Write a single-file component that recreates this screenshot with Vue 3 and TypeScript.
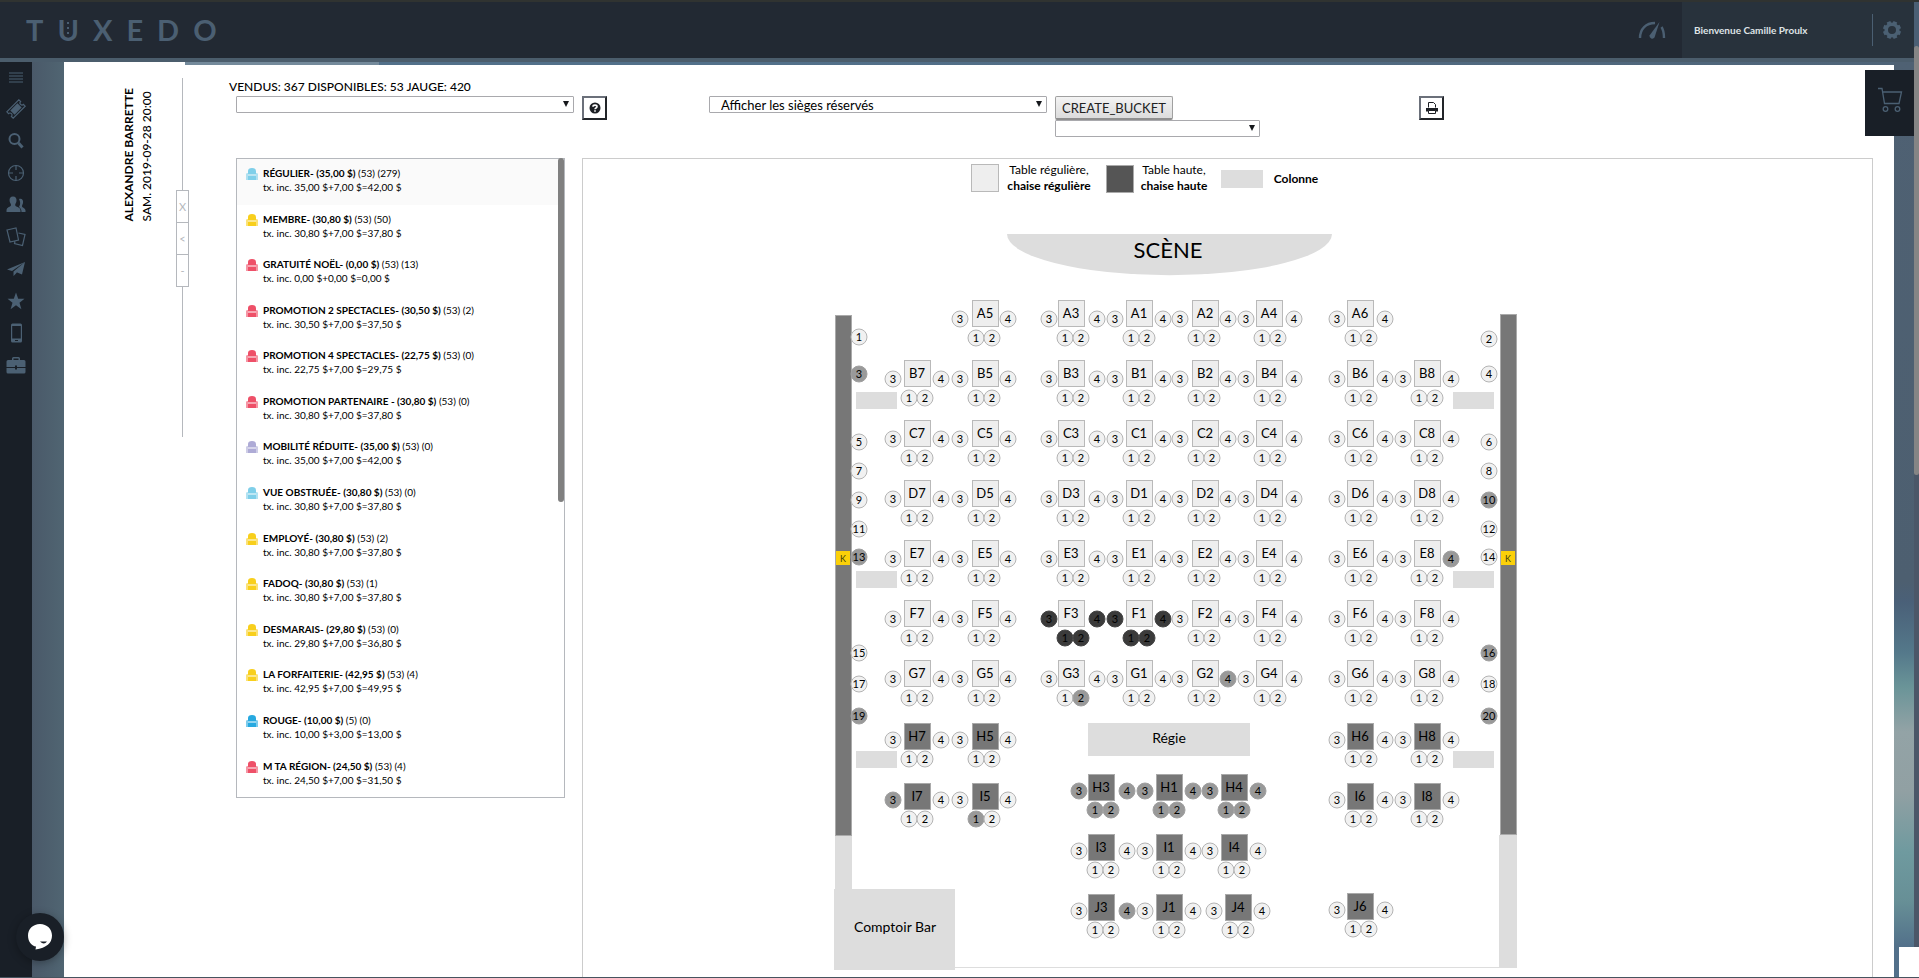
<script setup lang="ts">
import { computed, ref } from 'vue'

type SeatState = 'free' | 'taken' | 'held'

interface Price {
  name: string
  price: string
  counts: string
  detail: string
  color: string
}

interface Seat {
  id: string
  label: string
  x: number
  y: number
  state: SeatState
}

interface Table {
  id: string
  x: number
  y: number
  high: boolean
}

const prices: Price[] = [
  { name: 'RÉGULIER-', price: '(35,00 $)', counts: '(53) (279)', detail: '35,00 $+7,00 $=42,00 $', color: '#7fcfe9' },
  { name: 'MEMBRE-', price: '(30,80 $)', counts: '(53) (50)', detail: '30,80 $+7,00 $=37,80 $', color: '#f8cf1c' },
  { name: 'GRATUITÉ NOËL-', price: '(0,00 $)', counts: '(53) (13)', detail: '0,00 $+0,00 $=0,00 $', color: '#ee5068' },
  { name: 'PROMOTION 2 SPECTACLES-', price: '(30,50 $)', counts: '(53) (2)', detail: '30,50 $+7,00 $=37,50 $', color: '#ee5068' },
  { name: 'PROMOTION 4 SPECTACLES-', price: '(22,75 $)', counts: '(53) (0)', detail: '22,75 $+7,00 $=29,75 $', color: '#ee5068' },
  { name: 'PROMOTION PARTENAIRE -', price: '(30,80 $)', counts: '(53) (0)', detail: '30,80 $+7,00 $=37,80 $', color: '#ee5068' },
  { name: 'MOBILITÉ RÉDUITE-', price: '(35,00 $)', counts: '(53) (0)', detail: '35,00 $+7,00 $=42,00 $', color: '#aeabd6' },
  { name: 'VUE OBSTRUÉE-', price: '(30,80 $)', counts: '(53) (0)', detail: '30,80 $+7,00 $=37,80 $', color: '#7fcfe9' },
  { name: 'EMPLOYÉ-', price: '(30,80 $)', counts: '(53) (2)', detail: '30,80 $+7,00 $=37,80 $', color: '#f8cf1c' },
  { name: 'FADOQ-', price: '(30,80 $)', counts: '(53) (1)', detail: '30,80 $+7,00 $=37,80 $', color: '#f8cf1c' },
  { name: 'DESMARAIS-', price: '(29,80 $)', counts: '(53) (0)', detail: '29,80 $+7,00 $=36,80 $', color: '#f8cf1c' },
  { name: 'LA FORFAITERIE-', price: '(42,95 $)', counts: '(53) (4)', detail: '42,95 $+7,00 $=49,95 $', color: '#f8cf1c' },
  { name: 'ROUGE-', price: '(10,00 $)', counts: '(5) (0)', detail: '10,00 $+3,00 $=13,00 $', color: '#27a9e0' },
  { name: 'M TA RÉGION-', price: '(24,50 $)', counts: '(53) (4)', detail: '24,50 $+7,00 $=31,50 $', color: '#ee5068' },
]
const selected = ref(0)

const tables: Table[] = []
const seats: Seat[] = []

const taken = new Set([
  'E8-4', 'G2-4', 'G3-2', 'I7-3', 'I5-1', 'J3-4',
  ...['H3', 'H1', 'H4'].flatMap((t) => [1, 2, 3, 4].map((n) => `${t}-${n}`)),
  'S-3', 'S-13', 'S-19', 'S-10', 'S-16', 'S-20',
])
const held = new Set(['F3', 'F1'].flatMap((t) => [1, 2, 3, 4].map((n) => `${t}-${n}`)))

function addSeat(id: string, label: string, x: number, y: number): void {
  const state: SeatState = held.has(id) ? 'held' : taken.has(id) ? 'taken' : 'free'
  seats.push({ id, label, x, y, state })
}

function addTable(id: string, x: number, seatX: number, y: number, high: boolean): void {
  tables.push({ id, x, y, high })
  const side = y + (high ? 4 : 6)
  const front = y + (high ? 23 : 25)
  addSeat(`${id}-3`, '3', seatX - 24, side)
  addSeat(`${id}-4`, '4', seatX + 24, side)
  addSeat(`${id}-1`, '1', seatX - 8, front)
  addSeat(`${id}-2`, '2', seatX + 8, front)
}

// Table centre and seat-group centre of each column
const columns: Record<string, [number, number]> = {
  '7': [917, 917],
  '5': [985, 984],
  '3': [1071, 1073],
  '1': [1139, 1139],
  '2': [1205, 1204],
  '4': [1269, 1270],
  '6': [1360, 1361],
  '8': [1427, 1427],
}
const floor: [string, string, number, boolean][] = [
  ['A', '531246', 313, false],
  ['B', '75312468', 373, false],
  ['C', '75312468', 433, false],
  ['D', '75312468', 493, false],
  ['E', '75312468', 553, false],
  ['F', '75312468', 613, false],
  ['G', '75312468', 673, false],
  ['H', '7568', 736, true],
  ['I', '7568', 796, true],
  ['J', '6', 906, true],
]
for (const [row, cols, y, high] of floor) {
  for (const c of cols) addTable(row + c, columns[c][0], columns[c][1], y, high)
}
// Tables behind the sound desk
for (const [row, y] of [['H', 787], ['I', 847], ['J', 907]] as [string, number][]) {
  addTable(`${row}3`, 1101, 1103, y, true)
  addTable(`${row}1`, 1169, 1169, y, true)
  const x = row === 'J' ? 1238 : 1234
  addTable(`${row}4`, x, x, y, true)
}
// Seats along both walls
const leftYs = [337, 374, 442, 471, 500, 529, 557, 653, 684, 716]
leftYs.forEach((y, i) => {
  addSeat(`S-${2 * i + 1}`, String(2 * i + 1), 859, y)
  addSeat(`S-${2 * i + 2}`, String(2 * i + 2), 1489, i === 0 ? 339 : y)
})

const pillars = [392, 571, 751].flatMap((y) => [{ x: 856, y }, { x: 1453, y }])

const sold = 367
const total = 420
const available = computed(() => total - sold)
</script>

<template>
  <div class="page">
    <header class="topbar">
      <a class="logo" href="#" aria-label="Tuxedo">
        <span>T</span><span class="u">U<i class="studs"></i></span><span>X</span><span>E</span><span>D</span><span>O</span>
      </a>
      <a class="gauge" href="#" aria-label="Tableau de bord">
        <svg width="28" height="20" viewBox="0 0 28 20" fill="none" stroke="currentColor">
          <path d="M2 18C2 9 8 3 17 3" stroke-width="2.4" />
          <path d="M23.5 7C25.5 10 26 13 26 18" stroke-width="2.4" />
          <path d="M21.5 2L11.5 15.5A2.8 2.8 0 0 0 16.5 17.5Z" fill="currentColor" stroke="none" />
        </svg>
      </a>
      <div class="user">
        <span class="welcome">Bienvenue Camille Proulx</span>
        <button class="gear" type="button" aria-label="Réglages">
          <svg width="20" height="20" viewBox="-10 -10 20 20">
            <circle r="5.8" fill="none" stroke="currentColor" stroke-width="3.6" />
            <g fill="currentColor">
              <rect v-for="a in 8" :key="a" x="-2" y="-9" width="4" height="3" :transform="`rotate(${a * 45 + 22})`" />
            </g>
          </svg>
        </button>
      </div>
      <div class="top-gap"></div>
    </header>

    <div class="body">
      <nav class="side" aria-label="Menu principal">
        <a href="#" aria-label="Menu"><svg viewBox="0 0 20 20"><path d="M3 6h14M3 9h14M3 12h14M3 15h14" class="line" /></svg></a>
        <a href="#" aria-label="Billets"><svg viewBox="0 0 20 20"><g transform="rotate(-45 10 10)"><path d="M1.5 5.500h17v2.500a2 2 0 0 0 0 4v2.500h-17v-2.500a2 2 0 0 0 0-4z" class="line" /><rect x="5" y="7" width="10" height="6" /></g></svg></a>
        <a href="#" aria-label="Recherche"><svg viewBox="0 0 20 20"><circle cx="8.5" cy="8" r="5" class="line thick" /><path d="M12.5 12l4 4.5" class="line fat" /></svg></a>
        <a href="#" aria-label="Cible"><svg viewBox="0 0 20 20"><circle cx="10" cy="10" r="7.5" class="line" /><path d="M10 2v5M10 13v5M2 10h5M13 10h5" class="line" /></svg></a>
        <a href="#" aria-label="Clients"><svg viewBox="0 0 20 20"><path d="M13 4c3-1 4.5 1 4 4-.3 1.6-1 2-1 3.5 0 1 3.5 1.500 3.5 4V17h-4c0-3-1.500-4-2.500-5 1-2 2-4 0-8z" /><path d="M7 1.500c2.600 0 3.800 1.600 3.500 4.500-.2 2-1.300 2.600-1.300 4 0 2 5.300 1.800 5.300 5.500v1.500H.5v-1.500C.5 11.800 5 12 5 10c0-1.400-1.200-2-1.400-4C3.300 3.100 4.400 1.500 7 1.500z" /></svg></a>
        <a href="#" aria-label="Cartes"><svg viewBox="0 0 20 20"><path d="M1 3l9-2 2.500 12-8.500 2zM12.500 6l6.500 1.500-2.500 11-8-2L9 14.500" class="line" /></svg></a>
        <a href="#" aria-label="Envois"><svg viewBox="0 0 20 20"><path d="M19 3L1 10.500l5 1.500zM19 3L7.500 12.500V17l2.500-2.500zM19 3l-9 10 6 2.500z" /></svg></a>
        <a href="#" aria-label="Favoris"><svg viewBox="0 0 20 20"><path d="M10 1.500l2.200 6.200h6.300l-5 4 1.900 6.500-5.400-3.900-5.400 3.900 1.900-6.500-5-4h6.300z" /></svg></a>
        <a href="#" aria-label="Mobile"><svg viewBox="0 0 20 20"><path fill-rule="evenodd" d="M6.500.5h8q1.500 0 1.500 1.500v16q0 1.500-1.500 1.500h-8Q5 19.500 5 18V2Q5 .5 6.500.5zM6.200 3v12.500h8.600V3zM9 17v1h3v-1z" /></svg></a>
        <a href="#" aria-label="Administration"><svg viewBox="0 0 20 20"><path fill-rule="evenodd" d="M6 5V3.500Q6 2 7.500 2h5Q14 2 14 3.500V5h4q1.500 0 1.500 1.500V12H11v-1.500H9V12H.5V6.500Q.5 5 2 5zm1.500 0h5V3.500h-5zM.5 13H9v1.500h2V13h8.500v4q0 1.500-1.500 1.500H2Q.5 18.500.5 17z" /></svg></a>
      </nav>
      <div class="left-backdrop"></div>

      <main class="sheet">
        <section class="event">
          <h1><span>ALEXANDRE BARRETTE</span><span>SAM. 2019-09-28 20:00</span></h1>
          <div class="rail">
            <div class="rail-buttons">
              <button type="button" aria-label="Fermer">X</button>
              <button type="button" aria-label="Replier">&lt;</button>
              <button type="button" aria-label="Réduire">-</button>
            </div>
          </div>
        </section>

        <section class="content">
          <div class="photo-edge"></div>
          <p class="totals">VENDUS: {{ sold }} DISPONIBLES: {{ available }} JAUGE: {{ total }}</p>
          <div class="tools">
            <div class="pick wide"><select aria-label="Filtre"><option></option></select></div>
            <button class="square help" type="button" aria-label="Aide">
              <svg width="12" height="12" viewBox="0 0 12 12"><circle cx="6" cy="6" r="5.5" fill="#1c1f24" /><path d="M4 4.700C4 2.600 8 2.600 8 4.700 8 6 6 6 6 7.300M6 8.200v1.500" fill="none" stroke="#fff" stroke-width="1.6" /></svg>
            </button>
            <div class="pick wide"><select aria-label="Affichage des sièges"><option>Afficher les sièges réservés</option></select></div>
            <div class="bucket">
              <button type="button" class="create">CREATE_BUCKET</button>
              <div class="pick"><select aria-label="Panier"><option></option></select></div>
            </div>
            <button class="square print" type="button" aria-label="Imprimer">
              <svg width="12" height="12" viewBox="0 0 12 12" fill="none" stroke="#1c1f24"><path d="M2.500 5.500v-5h5l2 2v3" /><path d="M0 6h12v3.500H0z" fill="#1c1f24" stroke="none" /><path d="M2.500 8.500h7v3h-7z" fill="#fff" /></svg>
            </button>
          </div>

          <div class="panels">
            <ul class="prices">
              <li v-for="(p, i) in prices" :key="p.name">
                <button type="button" :class="{ active: i === selected }" @click="selected = i">
                  <svg width="12" height="12" viewBox="0 0 12 12" :fill="p.color">
                    <path d="M2 6.500V3Q2 0 6 0T10 3v3.500z" />
                    <path d="M2 7.500h8V12H2z" />
                    <path d="M0 6q0-1 2-1v7H0zM10 5q2 0 2 1v6h-2z" opacity="0.6" />
                  </svg>
                  <span class="price-text"><span><strong>{{ p.name }} {{ p.price }}</strong> {{ p.counts }}</span><span>tx. inc. {{ p.detail }}</span></span>
                </button>
              </li>
              <li class="thumb" aria-hidden="true"></li>
            </ul>

            <div class="map">
              <svg viewBox="583 159 1289 819" preserveAspectRatio="xMidYMin meet" role="img" aria-label="Plan de salle">
                <g class="legend">
                  <rect x="971" y="164" width="27" height="27" class="table" />
                  <text x="1049" y="174">Table régulière,</text>
                  <text x="1049" y="190" class="strong">chaise régulière</text>
                  <rect x="1106" y="165" width="27" height="27" class="table dark" />
                  <text x="1174" y="174">Table haute,</text>
                  <text x="1174" y="190" class="strong">chaise haute</text>
                  <rect x="1221" y="170" width="42" height="18" class="zone" />
                  <text x="1296" y="183" class="strong">Colonne</text>
                </g>
                <path class="zone" d="M1007 234H1332A162 41 0 0 1 1007 234Z" />
                <text x="1168" y="258" class="stage">SCÈNE</text>

                <rect x="835" y="836" width="17" height="53" class="zone" />
                <rect x="1499" y="835" width="18" height="133" class="zone" />
                <rect x="835" y="315" width="16" height="520" class="wall" />
                <rect x="1500" y="314" width="16" height="520" class="wall" />
                <rect x="955" y="967" width="545" height="1" class="zone" />
                <rect x="834" y="889" width="121" height="81" class="zone" />
                <text x="895" y="932" class="area">Comptoir Bar</text>
                <rect x="1088" y="723" width="162" height="33" class="zone" />
                <text x="1169" y="743" class="area">Régie</text>
                <rect v-for="p in pillars" :key="`${p.x}-${p.y}`" :x="p.x" :y="p.y" width="41" height="17" class="zone" />

                <g v-for="t in tables" :key="t.id">
                  <rect :x="t.x - 13" :y="t.y - 13" width="26" height="26" class="table" :class="{ high: t.high }" />
                  <text :x="t.x" :y="t.y + 5" class="table-name">{{ t.id }}</text>
                </g>
                <g v-for="s in seats" :key="s.id" class="seat" :class="s.state">
                  <circle :cx="s.x" :cy="s.y" r="8" />
                  <text :x="s.x" :y="s.y + 4">{{ s.label }}</text>
                </g>
                <g class="key">
                  <rect x="836" y="551" width="14" height="14" />
                  <text x="843" y="562">K</text>
                  <rect x="1501" y="551" width="14" height="14" />
                  <text x="1508" y="562">K</text>
                </g>
              </svg>
            </div>
          </div>
        </section>
      </main>
      <div class="backdrop"></div>
      <div class="scroll"><div class="scroll-thumb"></div></div>
    </div>

    <button class="cart" type="button" aria-label="Panier d'achats">
      <svg width="26" height="26" viewBox="0 0 26 26" fill="none" stroke="currentColor" stroke-width="1.3"><path d="M1 1.500h4L7.500 16.500h14.500L24.500 5H6" /><circle cx="8.5" cy="22" r="2.3" /><circle cx="20.5" cy="22" r="2.3" /></svg>
    </button>
    <button class="chat" type="button" aria-label="Clavardage">
      <svg width="24" height="26" viewBox="0 0 24 26"><path d="M12 0C5 0 0 5 0 11.500S4 22 8 22.500L7.500 25.500Q24 23 24 11.500C24 5 19 0 12 0z" fill="#fff" /><path d="M12 17.500h7q-3 4-7 0z" fill="#191f27" /></svg>
    </button>
    <div class="corner"></div>
  </div>
</template>

<style>
html,
body {
  margin: 0;
  overflow: hidden;
}
</style>

<style scoped>
.page {
  position: relative;
  display: flex;
  flex-direction: column;
  box-sizing: border-box;
  height: 100vh;
  overflow: hidden;
  border-bottom: 1px solid #46545f;
  background: #4b5d6c;
  color: #000;
  font-family: Lato, 'Liberation Sans', sans-serif;
  font-size: 11px;
}
button,
select {
  font-family: inherit;
  color: inherit;
}
a {
  color: inherit;
  text-decoration: none;
}

/* Header */
.topbar {
  display: flex;
  flex: none;
  height: 56px;
  border-top: 2px solid #303331;
  background: #222933;
  color: #4b5f72;
}
.logo {
  display: flex;
  align-items: center;
  gap: 14px;
  margin-left: 26px;
  font-size: 29px;
  font-weight: 700;
  line-height: 56px;
}
.u {
  position: relative;
}
.studs {
  position: absolute;
  left: 10px;
  top: 20px;
  width: 2px;
  height: 14px;
  background: repeating-linear-gradient(#4b5f72 0 2px, transparent 2px 5px);
}
.gauge {
  display: flex;
  align-items: center;
  margin-left: auto;
  margin-right: 16px;
}
.user {
  display: flex;
  align-items: center;
  justify-content: space-between;
  box-sizing: border-box;
  width: 232px;
  padding-left: 12px;
  background: #28323c;
}
.welcome {
  color: #dfe3e6;
  font-size: 10px;
  font-weight: 700;
}
.gear {
  display: flex;
  align-items: center;
  justify-content: center;
  width: 42px;
  height: 32px;
  padding: 0 4px 0 0;
  border: 0;
  border-left: 1px solid #4b5f72;
  background: none;
  color: #4b6073;
}
.top-gap {
  width: 5px;
  background: #4b5f74;
}

/* Body */
.body {
  display: flex;
  flex: 1;
  min-height: 0;
  padding-top: 4px;
}
.side {
  display: flex;
  flex: none;
  flex-direction: column;
  width: 32px;
  background: #191f27;
}
.side a {
  display: flex;
  align-items: center;
  justify-content: center;
  box-sizing: border-box;
  width: 31px;
  height: 32px;
  padding-bottom: 2px;
  color: #4b6073;
}
.side svg {
  width: 20px;
  height: 20px;
  fill: currentColor;
}
.side .line {
  fill: none;
  stroke: currentColor;
  stroke-width: 1.2px;
}
.side .thick {
  stroke-width: 2px;
}
.side .fat {
  stroke-width: 3px;
}
.left-backdrop {
  flex: none;
  width: 32px;
  background: linear-gradient(90deg, #4a5969, #506572);
}
.sheet {
  display: flex;
  flex: 1;
  min-width: 0;
  background: #fff;
}
.event {
  display: flex;
  flex: none;
  gap: 20px;
  width: 121px;
  justify-content: flex-end;
}
.event h1 {
  display: flex;
  flex-direction: column;
  align-self: flex-start;
  margin: 26px 0 0;
  writing-mode: vertical-rl;
  transform: rotate(180deg);
  font-size: 12px;
  font-weight: 700;
  line-height: 18px;
}
.event h1 span + span {
  font-weight: 500;
}
.rail {
  display: flex;
  align-self: flex-start;
  box-sizing: border-box;
  width: 13px;
  height: 359px;
  margin: 16px -4px 0 0;
  padding-top: 112px;
  background: linear-gradient(#b5b8bd, #b5b8bd) 6px 0 / 1px 100% no-repeat;
}
.rail-buttons {
  display: flex;
  flex-direction: column;
  width: 100%;
}
.rail button {
  box-sizing: border-box;
  height: 33px;
  margin-bottom: -1px;
  padding: 0;
  border: 1px solid #b5b8bd;
  background: #fff;
  color: #b5b8bd;
  font-size: 11px;
}
.content {
  display: flex;
  flex: 1;
  flex-direction: column;
  min-width: 0;
}
.photo-edge {
  height: 3px;
  background: linear-gradient(90deg, #748a9b 0 194px, #52708a 194px 600px, #4f6478);
}
.totals {
  margin: 12px 0 0 44px;
  font-size: 12px;
  font-weight: 500;
  line-height: 19px;
}
.tools {
  display: flex;
  align-items: flex-start;
  gap: 8px;
  height: 62px;
  margin-left: 51px;
}
.pick {
  position: relative;
}
.pick::after {
  content: '';
  position: absolute;
  top: 5px;
  right: 5px;
  border: 3px solid transparent;
  border-top: 6px solid #16181c;
  border-bottom: 0;
}
.pick select {
  display: block;
  box-sizing: border-box;
  width: 205px;
  height: 17px;
  padding: 1px 20px 0 11px;
  border: 1px solid #a9a9ad;
  border-radius: 1px;
  background: #fff;
  appearance: none;
  font-size: 13px;
  line-height: 14px;
}
.wide select {
  width: 338px;
}
.square {
  display: flex;
  align-items: center;
  justify-content: center;
  width: 25px;
  height: 24px;
  padding: 0;
  border: 2px solid;
  border-color: #6b707a #222529 #222529 #6b707a;
  background: #fff;
}
.help {
  margin-right: 94px;
}
.create {
  display: block;
  height: 24px;
  padding: 0 6px;
  border: 1px solid #a0a0a0;
  border-bottom: 2px solid #8f8f8f;
  border-radius: 2px;
  background: linear-gradient(#f4f4f4, #dcdcdc);
  color: #222;
  font-size: 13px;
  line-height: 20px;
}
.print {
  margin-left: 151px;
}
.panels {
  display: flex;
  flex: 1;
  gap: 17px;
  min-height: 0;
  margin: 0 21px 0 51px;
}
.prices {
  position: relative;
  display: flex;
  flex: none;
  flex-direction: column;
  box-sizing: border-box;
  width: 329px;
  height: 640px;
  margin: 0;
  padding: 0;
  border: 1px solid #b5b8bd;
  list-style: none;
}
.prices li {
  display: flex;
  flex: 1;
}
.prices button {
  display: flex;
  flex: 1;
  gap: 5px;
  padding: 7px 9px 0;
  border: 0;
  background: none;
  font-size: 10px;
  line-height: 14px;
  text-align: left;
}
.prices button.active {
  background: #fafafa;
}
.prices svg {
  margin-top: 2px;
}
.price-text {
  display: flex;
  flex-direction: column;
}
.prices .thumb {
  position: absolute;
  top: -1px;
  right: 0;
  width: 6px;
  height: 344px;
  border-radius: 3px;
  background: #808080;
}
.map {
  flex: 1;
  min-width: 0;
  overflow: hidden;
  border: 1px solid #ccc;
  border-bottom: 0;
}
.map svg {
  display: block;
  width: 100%;
  height: 819px;
  text-anchor: middle;
}
.map rect {
  shape-rendering: crispEdges;
}
.legend {
  font-size: 12px;
}
.strong {
  font-weight: 700;
}
.zone {
  fill: #ddd;
}
.stage {
  font-size: 22px;
}
.area {
  font-size: 14px;
}
.wall {
  fill: #777;
  stroke: #aaa;
}
.table {
  fill: #eee;
  stroke: #b9b9b9;
  stroke-width: 1px;
}
.table.high {
  fill: #777;
  stroke: #aaa;
}
.table.dark {
  fill: #555;
  stroke: #aaa;
}
.table-name {
  font-size: 13px;
}
.seat circle {
  fill: #f1f1f1;
  stroke: #b4b4b4;
  stroke-width: 1px;
}
.seat text {
  font-size: 11px;
}
.seat.taken circle {
  fill: #999;
  stroke: #a0a0a0;
}
.seat.held circle {
  fill: #3b3b3b;
  stroke: #444;
}
.key rect {
  fill: #fbd009;
}
.key text {
  fill: #44400c;
  font-size: 9px;
}

/* Right edge */
.backdrop {
  flex: none;
  width: 20px;
  background: linear-gradient(#4f6173 0, #4d5f70 520px, #4a6078 540px, #54788a 590px, #6a9498 625px, #93a3a6 670px, #91a0a3 730px, #6f9a9f 790px, #678f96 840px, #52708a 885px);
}
.scroll {
  flex: none;
  width: 5px;
  background: #4b5768;
}
.scroll-thumb {
  height: 429px;
  margin-top: -16px;
  border-radius: 3px;
  background: #858585;
}
.cart {
  position: absolute;
  top: 70px;
  right: 5px;
  display: flex;
  justify-content: center;
  width: 49px;
  height: 66px;
  padding: 17px 0 0;
  border: 0;
  background: #191f27;
  color: #4b6073;
}
.chat {
  position: absolute;
  left: 16px;
  bottom: 16px;
  display: flex;
  align-items: center;
  justify-content: center;
  width: 48px;
  height: 48px;
  padding: 0;
  border: 0;
  border-radius: 50%;
  background: #191f27;
  box-shadow: 0 2px 8px rgba(0, 0, 0, 0.3);
}
.corner {
  position: absolute;
  right: 0;
  bottom: 0;
  width: 20px;
  height: 30px;
  background: #fff;
}
</style>
